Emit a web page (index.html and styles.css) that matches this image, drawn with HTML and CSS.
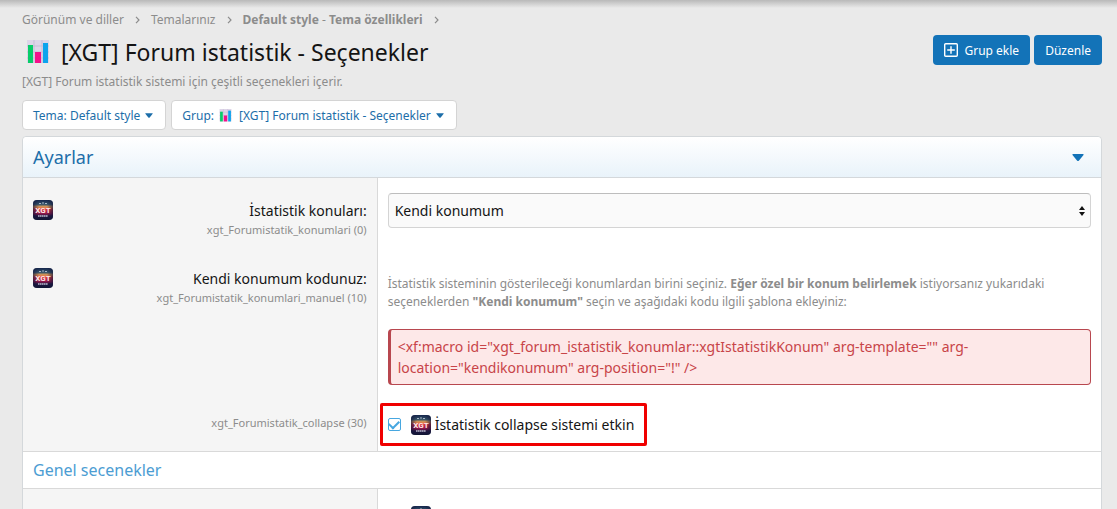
FILE: index.html
```html
<!DOCTYPE html>
<html lang="tr">
<head>
  <meta charset="UTF-8">
  <meta name="viewport" content="width=device-width, initial-scale=1">
  <title>[XGT] Forum istatistik - Seçenekler</title>
  <link rel="stylesheet" href="styles.css">
</head>
<body>

<!-- shared icons -->
<svg class="sprite" width="0" height="0" aria-hidden="true">
  <defs>
    <linearGradient id="sunset" x1="0" y1="0" x2="0" y2="1">
      <stop offset="0" stop-color="#15254c"/>
      <stop offset=".22" stop-color="#35556b"/>
      <stop offset=".34" stop-color="#e09a55"/>
      <stop offset=".48" stop-color="#d8343c"/>
      <stop offset=".68" stop-color="#8c164a"/>
      <stop offset=".8" stop-color="#1f1742"/>
      <stop offset="1" stop-color="#101633"/>
    </linearGradient>
    <linearGradient id="edges">
      <stop offset="0" stop-color="#12173a" stop-opacity=".7"/>
      <stop offset=".3" stop-color="#12173a" stop-opacity="0"/>
      <stop offset=".7" stop-color="#12173a" stop-opacity="0"/>
      <stop offset="1" stop-color="#12173a" stop-opacity=".7"/>
    </linearGradient>
  </defs>
  <symbol id="xgt" viewBox="0 0 20 20">
    <rect width="20" height="20" rx="4" fill="url(#sunset)"/>
    <rect width="20" height="20" rx="4" fill="url(#edges)"/>
    <path d="M6 3.5h2M9 3h2M12 3.5h2" stroke="#a9b6c6" stroke-width="1"/>
    <text x="10" y="13" text-anchor="middle" font-family="Roboto, sans-serif" font-weight="bold" font-size="8" fill="#ffe9ea">XGT</text>
    <path d="M5 16h10" stroke="#b9bbcd" stroke-width="1.4" stroke-dasharray="1.6 .4"/>
  </symbol>
  <symbol id="chart" viewBox="0 0 24 24">
    <rect x="1" y="0" width="22" height="23" fill="#ddd5e8"/>
    <path d="M1 6h22M1 12h22M1 18h22M8 0v23M16 0v23" stroke="#c3b9d2" stroke-width=".8"/>
    <rect x="2" y="5" width="5" height="18" fill="#08cd69"/>
    <rect x="9" y="12" width="6" height="11" fill="#f5108b"/>
    <rect x="17" y="3" width="5" height="20" fill="#0da3ed"/>
  </symbol>
  <symbol id="caret" viewBox="0 0 12 7">
    <path d="M1 0h10q1 0 .5 1L7 6.4q-1 1-2 0L.5 1Q0 0 1 0z" fill="currentColor"/>
  </symbol>
  <symbol id="chevron" viewBox="0 0 5 8">
    <path d="M1 .8l3 3.2-3 3.2" fill="none" stroke="currentColor" stroke-width="1.2"/>
  </symbol>
</svg>

<main class="page">
  <nav class="breadcrumbs">
    <a href="#">Görünüm ve diller</a>
    <svg class="chevron"><use href="#chevron"/></svg>
    <a href="#">Temalarınız</a>
    <svg class="chevron"><use href="#chevron"/></svg>
    <a href="#"><b>Default style</b> - <b>Tema özellikleri</b></a>
    <svg class="chevron"><use href="#chevron"/></svg>
  </nav>

  <header class="pageHeader">
    <h1><svg class="titleIcon"><use href="#chart"/></svg>[XGT] Forum istatistik - Seçenekler</h1>
    <div class="actions">
      <button type="button" class="button">
        <svg class="plus" viewBox="0 0 14 14"><path d="M1.7.7h10.6q1 0 1 1v10.6q0 1-1 1H1.7q-1 0-1-1V1.7q0-1 1-1zM7 3.2v7.6M3.2 7h7.6" fill="none" stroke="currentColor" stroke-width="1.4"/></svg>
        Grup ekle
      </button>
      <button type="button" class="button">Düzenle</button>
    </div>
  </header>
  <p class="description">[XGT] Forum istatistik sistemi için çeşitli seçenekleri içerir.</p>

  <div class="filters">
    <button type="button" class="filter">Tema: Default style <svg class="caret"><use href="#caret"/></svg></button>
    <button type="button" class="filter">Grup: <svg class="groupIcon"><use href="#chart"/></svg>[XGT] Forum istatistik - Seçenekler <svg class="caret"><use href="#caret"/></svg></button>
  </div>

  <form class="block">
    <h2 class="blockHeader">Ayarlar
      <button type="button" class="toggle" aria-label="Ayarlar"><svg><use href="#caret"/></svg></button>
    </h2>

    <div class="row">
      <div class="term">
        <svg class="xgt"><use href="#xgt"/></svg>
        <div class="termText">
          <label for="konum">İstatistik konuları:</label>
          <small>xgt_Forumistatik_konumlari (0)</small>
        </div>
      </div>
      <div class="value">
        <div class="selectBox">
          <select id="konum">
            <option>Kendi konumum</option>
          </select>
          <svg class="arrows" viewBox="0 0 6 10"><path d="M3 0l3 4H0zM3 10L0 6h6z" fill="#111"/></svg>
        </div>
      </div>
    </div>

    <div class="row">
      <div class="term">
        <svg class="xgt"><use href="#xgt"/></svg>
        <div class="termText">
          <span>Kendi konumum kodunuz:</span>
          <small>xgt_Forumistatik_konumlari_manuel (10)</small>
        </div>
      </div>
      <div class="value">
        <p class="explain">İstatistik sisteminin gösterileceği konumlardan birini seçiniz. <b>Eğer özel bir konum belirlemek</b> istiyorsanız yukarıdaki seçeneklerden <b>"Kendi konumum"</b> seçin ve aşağıdaki kodu ilgili şablona ekleyiniz:</p>
        <div class="code">&lt;xf:macro id="xgt_forum_istatistik_konumlar::xgtIstatistikKonum" arg-template="" arg-location="kendikonumum" arg-position="!" /&gt;</div>
      </div>
    </div>

    <div class="row rowCheck">
      <div class="term">
        <div class="termText"><small>xgt_Forumistatik_collapse (30)</small></div>
      </div>
      <div class="value">
        <label class="check marked">
          <input type="checkbox" checked>
          <svg class="xgt"><use href="#xgt"/></svg>
          İstatistik collapse sistemi etkin
        </label>
      </div>
    </div>

    <h3 class="sectionHeader">Genel secenekler</h3>

    <div class="row rowCheck">
      <div class="term"></div>
      <div class="value">
        <label class="check">
          <input type="checkbox" aria-label="XGT">
          <svg class="xgt"><use href="#xgt"/></svg>
        </label>
      </div>
    </div>
  </form>
</main>

</body>
</html>
```

FILE: styles.css
```css
* { box-sizing: border-box; }
body {
  margin: 0;
  height: 100vh;
  overflow: hidden;
  background: linear-gradient(#b9b9b9, #eaeaea 8px) #eaeaea;
  color: #141414;
  font: 14px/21px "Noto Sans", "Open Sans", sans-serif;
}
h1, h2, h3, p { margin: 0; font-weight: normal; }
a { color: inherit; text-decoration: none; }
button, select { font: inherit; }
.sprite { position: absolute; }
.page { padding: 11px 15px 0 22px; }

.breadcrumbs { display: flex; align-items: center; gap: 11px; color: #8c8c8c; font-size: 12px; line-height: 18px; }
.chevron { width: 5px; height: 8px; }

.pageHeader { display: flex; justify-content: space-between; align-items: flex-start; margin-top: 6px; }
h1 { display: flex; align-items: center; gap: 11px; padding-left: 4px; font-size: 23px; line-height: 34px; }
.titleIcon { width: 24px; height: 24px; }
.actions { display: flex; gap: 4px; }
.button {
  display: flex;
  align-items: center;
  gap: 6px;
  height: 30px;
  padding: 0 11px;
  border: 0;
  border-radius: 4px;
  background: #1373b8;
  color: #fff;
  font-size: 12px;
}
.plus { width: 14px; height: 14px; }
.description { margin-top: 4px; color: #8c8c8c; font-size: 12px; line-height: 18px; }

.filters { display: flex; gap: 5px; margin: 9px 0 6px; }
.filter {
  display: flex;
  align-items: center;
  gap: 5px;
  height: 30px;
  padding: 0 12px 0 10px;
  border: 1px solid #d4d4d4;
  border-radius: 4px;
  background: #fff;
  color: #1c6ea9;
  font-size: 12px;
}
.caret { width: 8px; height: 5px; }
.groupIcon { width: 13px; height: 13px; margin-right: 2px; }

.block { border: 1px solid #d4d8db; border-radius: 4px 4px 0 0; background: #fff; }
.blockHeader {
  display: flex;
  justify-content: space-between;
  align-items: center;
  height: 41px;
  padding: 0 17px 0 10px;
  border-bottom: 1px solid #d4d8db;
  border-radius: 4px 4px 0 0;
  background: linear-gradient(#fff, #e9f3fa);
  color: #1c6ea9;
  font-size: 18px;
}
.toggle { display: flex; padding: 0; border: 0; background: none; color: #1373b8; }
.toggle svg { width: 12px; height: 7px; }

.row { display: grid; grid-template-columns: 32.9% 1fr; }
.term {
  display: flex;
  justify-content: space-between;
  padding: 22px 10px 8px;
  border-right: 1px solid #d9d9d9;
  background: #f5f5f5;
}
.termText { flex: 1; text-align: right; }
.termText label, .termText span { display: block; }
small { display: block; color: #8c8c8c; font-size: 11px; line-height: 17px; }
.xgt { flex: none; width: 20px; height: 20px; }
.value { padding: 15px 10px 18px; }

.selectBox { display: grid; align-items: center; }
.selectBox > * { grid-area: 1 / 1; }
select {
  width: 100%;
  height: 35px;
  padding: 0 6px;
  border: 1px solid #d4d4d4;
  border-top-color: #bdbdbd;
  border-radius: 4px;
  background: #fafafa;
  color: #141414;
  appearance: none;
}
.arrows { justify-self: end; width: 6px; height: 10px; margin-right: 6px; pointer-events: none; }

.explain { padding-top: 14px; color: #8c8c8c; font-size: 12px; line-height: 18px; }
.code {
  margin-top: 18px;
  padding: 6px 9px 6px 7px;
  border: 1px solid #b8474f;
  border-left-width: 3px;
  border-radius: 4px;
  background: #fde8e8;
  color: #c84448;
}

.rowCheck .term { padding-top: 11px; }
.rowCheck .value { padding: 0 2px 5px; }
.check { display: flex; align-items: center; gap: 4px; width: fit-content; padding: 17px 8px 11px; }
.marked { border: 3px solid #f00000; border-radius: 2px; padding: 8px 10px 8px 5px; height: 43px; }
.check input {
  display: grid;
  place-items: center;
  width: 13px;
  height: 13px;
  margin: 0 6px 0 0;
  border: 1px solid #47a7e0;
  border-radius: 2px;
  appearance: none;
}
.check input:checked::before {
  content: "";
  width: 8px;
  height: 5px;
  border: solid #47a7e0;
  border-width: 0 0 2px 2px;
  transform: translateY(-1px) rotate(-45deg);
}

.sectionHeader {
  padding: 0 10px;
  border: solid #d9d9d9;
  border-width: 1px 0;
  color: #4c9dd3;
  font-size: 16px;
  line-height: 36px;
}
```
